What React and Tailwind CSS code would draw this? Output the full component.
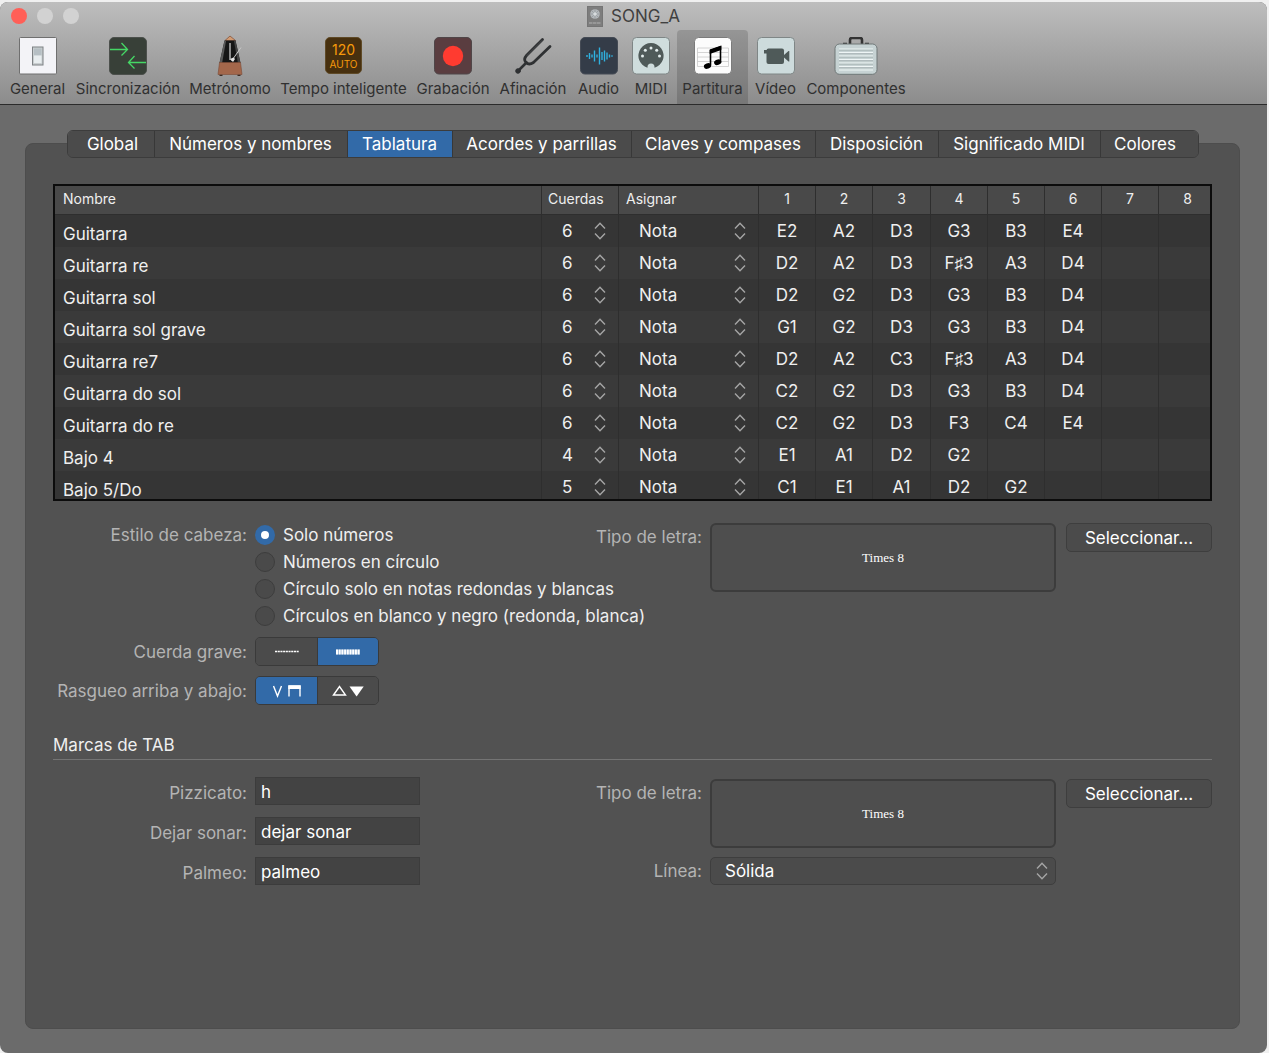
import { useState } from 'react';
import clsx from 'clsx';

const TABS = [
  { label: 'Global', width: 'w-[86px] pl-1' },
  { label: 'Números y nombres', width: 'w-[193px]' },
  { label: 'Tablatura', width: 'w-[105px]' },
  { label: 'Acordes y parrillas', width: 'w-[179px]' },
  { label: 'Claves y compases', width: 'w-[184px]' },
  { label: 'Disposición', width: 'w-[123px]' },
  { label: 'Significado MIDI', width: 'w-[162px]' },
  { label: 'Colores', width: 'w-[98px] pr-2' },
];

const TUNINGS = [
  { name: 'Guitarra', strings: 6, notes: ['E2', 'A2', 'D3', 'G3', 'B3', 'E4'] },
  { name: 'Guitarra re', strings: 6, notes: ['D2', 'A2', 'D3', 'F♯3', 'A3', 'D4'] },
  { name: 'Guitarra sol', strings: 6, notes: ['D2', 'G2', 'D3', 'G3', 'B3', 'D4'] },
  { name: 'Guitarra sol grave', strings: 6, notes: ['G1', 'G2', 'D3', 'G3', 'B3', 'D4'] },
  { name: 'Guitarra re7', strings: 6, notes: ['D2', 'A2', 'C3', 'F♯3', 'A3', 'D4'] },
  { name: 'Guitarra do sol', strings: 6, notes: ['C2', 'G2', 'D3', 'G3', 'B3', 'D4'] },
  { name: 'Guitarra do re', strings: 6, notes: ['C2', 'G2', 'D3', 'F3', 'C4', 'E4'] },
  { name: 'Bajo 4', strings: 4, notes: ['E1', 'A1', 'D2', 'G2'] },
  { name: 'Bajo 5/Do', strings: 5, notes: ['C1', 'E1', 'A1', 'D2', 'G2'] },
];

const HEAD_STYLES = [
  'Solo números',
  'Números en círculo',
  'Círculo solo en notas redondas y blancas',
  'Círculos en blanco y negro (redonda, blanca)',
];

const STRING_NUMBERS = [1, 2, 3, 4, 5, 6, 7, 8];

function GeneralIcon() {
  return (
    <svg width="38" height="38" viewBox="0 0 38 38">
      <rect x="0.5" y="0.5" width="37" height="36.5" rx="1" fill="#f3f3f7" stroke="#6f6f6f" />
      <rect x="13.5" y="10" width="10.5" height="18" fill="#c9ced0" stroke="#7d8184" />
      <rect x="15" y="11.5" width="7.5" height="7" fill="#b6bfc4" />
      <rect x="15" y="18.5" width="7.5" height="7.5" fill="#e8edef" />
    </svg>
  );
}

function SyncIcon() {
  return (
    <svg width="38" height="38" viewBox="0 0 38 38">
      <rect x="0.5" y="0.5" width="37" height="37" rx="4.5" fill="#384038" stroke="#4c504c" />
      <g fill="none" stroke="#45d765" strokeWidth="1.3">
        <path d="M1 12.5H18.500M12.500 6l6 6.500-6 6" />
        <path d="M37 25.5H19.500M25.500 19l-6 6.500 6 6" />
      </g>
    </svg>
  );
}

function MetronomeIcon() {
  return (
    <svg width="26" height="42" viewBox="0 0 26 42">
      <path d="M8 5.500L13 1l5.500 4.500z" fill="#d09a72" stroke="#86543c" strokeWidth="0.800" />
      <path d="M7.500 5.500h11L23.500 28h-21z" fill="#161616" />
      <path d="M7.500 5.500L2.500 28h2.600L9 6z" fill="#5a5a5a" />
      <path d="M18.500 5.500L23.500 28h-2.600L17 6z" fill="#454545" />
      <path d="M13 8v17" stroke="#9a9a9a" strokeWidth="1.800" />
      <path d="M14.500 26L24 12.500" stroke="#c8c8c8" strokeWidth="1" />
      <path d="M13 24l3.500-1.500 1.500 1.500-2 3z" fill="#e4e4e4" />
      <path d="M2.500 27.500h21L25 39.500H1z" fill="#a3674b" stroke="#7c4a35" strokeWidth="0.600" />
      <path d="M2.500 39.800h3v1.200h-3zM20.500 39.800h3v1.200h-3z" fill="#3c2a22" />
    </svg>
  );
}

function TempoIcon() {
  return (
    <span className="flex h-[37px] w-[37px] flex-col items-center justify-center rounded-[5px] border border-[#5f4a27] bg-[#47300f] text-[#f79a0b]">
      <span className="text-[14px] leading-4">120</span>
      <span className="text-[10px] leading-3">AUTO</span>
    </span>
  );
}

function RecordIcon() {
  return (
    <svg width="38" height="38" viewBox="0 0 38 38">
      <rect x="0.500" y="0.500" width="37" height="36.500" rx="4.500" fill="#5a3d40" stroke="#4f4648" />
      <circle cx="19" cy="19" r="10.200" fill="#ff3b30" />
    </svg>
  );
}

function TuningForkIcon() {
  return (
    <svg width="38" height="38" viewBox="0 0 38 38" fill="none" stroke="#2f3133" strokeLinecap="round">
      <path d="M28.500 2.500L12.500 18.500q-3.500 4 -.5 7t7.500 0L36 9.500" strokeWidth="2.800" />
      <path d="M12.500 25.500L4 34" strokeWidth="2.600" />
      <circle cx="4" cy="34" r="2.300" fill="#2f3133" strokeWidth="1" />
      <path d="M28 3.500L13 18.500" stroke="#5c5f61" strokeWidth="0.600" />
    </svg>
  );
}

function AudioIcon() {
  return (
    <svg width="38" height="38" viewBox="0 0 38 38">
      <rect x="0.500" y="0.500" width="37" height="36.500" rx="4.500" fill="#343c48" stroke="#444a54" />
      <path
        d="M7 18v2M9.500 16v6M12 17.500v3M14.500 13.500v11M17 17.500v3M19.500 10.500v17M22 15v8M24.500 13.500v11M27 15.500v7M29.500 17.500v3M32 18.200v1.600"
        stroke="#2fb1e0"
        strokeWidth="1.400"
      />
    </svg>
  );
}

function MidiIcon() {
  return (
    <svg width="38" height="38" viewBox="0 0 38 38">
      <rect x="0.500" y="0.500" width="37" height="36.500" rx="4" fill="#cfdddd" stroke="#7f8686" />
      <path d="M15.500 30.800A12.600 12.600 0 1 1 22.500 30.800V30a3.500 3.500 0 0 0-7 0z" fill="#4f5a59" />
      <g fill="#e3eded">
        <circle cx="10.500" cy="19" r="1.500" />
        <circle cx="13.300" cy="13.300" r="1.500" />
        <circle cx="19" cy="11" r="1.500" />
        <circle cx="24.700" cy="13.300" r="1.500" />
        <circle cx="27.500" cy="19" r="1.500" />
      </g>
    </svg>
  );
}

function ScoreIcon() {
  return (
    <svg width="38" height="38" viewBox="0 0 38 38">
      <rect x="0.500" y="0.500" width="37" height="36.500" rx="4" fill="#fcfcfc" stroke="#7b7b7b" />
      <path d="M3.500 11h31v18.500h-31zM3.500 15.500h31M3.500 20h31M3.500 24.500h31" fill="none" stroke="#c9c9c9" strokeWidth="0.800" />
      <path d="M16.500 28.500V13.500L26.500 10v15.500" fill="none" stroke="#000" strokeWidth="1.600" />
      <path d="M15.700 12.500L27.300 8.500v4.500L15.700 17z" />
      <ellipse cx="13.500" cy="29" rx="3.700" ry="2.700" transform="rotate(-20 13.500 29)" />
      <ellipse cx="23.700" cy="25.200" rx="3.700" ry="2.700" transform="rotate(-20 23.700 25.200)" />
    </svg>
  );
}

function VideoIcon() {
  return (
    <svg width="38" height="38" viewBox="0 0 38 38">
      <rect x="0.500" y="0.500" width="37" height="36.500" rx="4" fill="#cddbdc" stroke="#7f8686" />
      <rect x="9.500" y="11.500" width="17.500" height="15.500" rx="2" fill="#4f5a59" />
      <path d="M7 13h3v3.500H7zM27 18l4.500-4h.8v10.500h-.8L27 20.500z" fill="#4f5a59" />
    </svg>
  );
}

function ComponentsIcon() {
  return (
    <svg width="44" height="38" viewBox="0 0 44 38">
      <path d="M16 7V3q0-2 2-2h8q2 0 2 2v4" fill="none" stroke="#333" strokeWidth="2.600" />
      <path d="M9 6.500h4M31 6.500h4" stroke="#333" strokeWidth="1.500" />
      <rect x="1" y="7" width="42" height="30.300" rx="4.500" fill="#c6d2d3" stroke="#6f7777" />
      <path d="M5 12h34M5 15.500h34M5 19h34M5 22.500h34M5 26h34M5 29.500h34M5 33h34" stroke="#eef5f5" strokeWidth="1.200" />
      <path d="M5 13.200h34M5 16.700h34M5 20.200h34M5 23.700h34M5 27.200h34M5 30.700h34" stroke="#9fabac" strokeWidth="0.700" />
    </svg>
  );
}

const TOOLBAR = [
  { label: 'General', Icon: GeneralIcon, width: 'w-[67px]' },
  { label: 'Sincronización', Icon: SyncIcon, width: 'w-[114px]' },
  { label: 'Metrónomo', Icon: MetronomeIcon, width: 'w-[90px]' },
  { label: 'Tempo inteligente', Icon: TempoIcon, width: 'w-[137px]' },
  { label: 'Grabación', Icon: RecordIcon, width: 'w-[82px]' },
  { label: 'Afinación', Icon: TuningForkIcon, width: 'w-[78px]' },
  { label: 'Audio', Icon: AudioIcon, width: 'w-[53px]' },
  { label: 'MIDI', Icon: MidiIcon, width: 'w-[52px]' },
  { label: 'Partitura', Icon: ScoreIcon, width: 'w-[71px]' },
  { label: 'Vídeo', Icon: VideoIcon, width: 'w-[55px]' },
  { label: 'Componentes', Icon: ComponentsIcon, width: 'w-[106px]' },
];

function DocumentIcon() {
  return (
    <svg width="16" height="21" viewBox="0 0 16 21">
      <rect x="0.500" y="0.500" width="15" height="20" fill="#7d7d7d" stroke="#757575" />
      <circle cx="8" cy="8" r="4.800" fill="#b4b8bc" />
      <path d="M8 3.500v9M3.500 8h9M4.800 4.800l6.400 6.400M11.200 4.800l-6.400 6.400" stroke="#8e9498" strokeWidth="0.700" />
      <circle cx="8" cy="8" r="1.800" fill="#d8dcdf" />
      <path d="M2 17h12" stroke="#b4b4b4" strokeWidth="1.200" strokeDasharray="3 0.500 4 0.500" />
    </svg>
  );
}

function Chevrons() {
  return (
    <svg width="12" height="18" viewBox="0 0 12 18" fill="none" stroke="#a5a5a5" strokeWidth="1.400">
      <path d="M1 6.500L6 1.200l5 5.300M1 11.500l5 5.300 5-5.300" />
    </svg>
  );
}

function CellSelect({ label, options, initial }) {
  const [value, setValue] = useState(initial);
  return (
    <div className="relative">
      <select
        aria-label={label}
        value={value}
        onChange={(e) => setValue(e.target.value)}
        className="block h-8 w-full appearance-none bg-transparent pl-5 outline-none"
      >
        {options.map((o) => (
          <option key={o} value={o}>{o}</option>
        ))}
      </select>
      <span className="pointer-events-none absolute inset-y-0 right-3 flex items-center">
        <Chevrons />
      </span>
    </div>
  );
}

function TuningTable() {
  const headCell = 'h-[29px] border-b border-[#2e2e2e] p-0 pb-[2px] font-normal';
  const divider = 'border-l border-[#2e2e2e]';

  return (
    <div className="h-[317px] overflow-hidden border-2 border-[#0c0c0c] bg-[#353535]">
      <table className="w-full table-fixed border-separate border-spacing-0 text-[#efefef]">
        <colgroup>
          <col />
          <col className="w-[77px]" />
          <col className="w-[140px]" />
          <col className="w-[57px]" />
          <col className="w-[57px]" />
          <col className="w-[58px]" />
          <col className="w-[57px]" />
          <col className="w-[57px]" />
          <col className="w-[57px]" />
          <col className="w-[57px]" />
          <col className="w-[52px]" />
        </colgroup>
        <thead className="bg-[#494949] text-[14px]">
          <tr>
            <th className={clsx(headCell, 'pl-2 text-left')}>Nombre</th>
            <th className={clsx(headCell, divider, 'pl-[6px] text-left')}>Cuerdas</th>
            <th className={clsx(headCell, divider, 'pl-[7px] text-left')}>Asignar</th>
            {STRING_NUMBERS.map((n) => (
              <th key={n} className={clsx(headCell, divider, 'text-center last:pl-[6px]')}>{n}</th>
            ))}
          </tr>
        </thead>
        <tbody>
          {TUNINGS.map((t) => (
            <tr key={t.name} className="h-8 even:bg-[#3a3a3a]">
              <td className="p-0 pl-2 pt-[5px]">{t.name}</td>
              <td className={clsx(divider, 'p-0')}>
                <CellSelect label={`Cuerdas, ${t.name}`} options={[3, 4, 5, 6, 7, 8]} initial={t.strings} />
              </td>
              <td className={clsx(divider, 'p-0')}>
                <CellSelect label={`Asignar, ${t.name}`} options={['Nota', 'Canal']} initial="Nota" />
              </td>
              {STRING_NUMBERS.map((n) => (
                <td key={n} className={clsx(divider, 'p-0 text-center')}>{t.notes[n - 1]}</td>
              ))}
            </tr>
          ))}
        </tbody>
      </table>
    </div>
  );
}

function Segmented({ labelId, items }) {
  const [active, setActive] = useState(items.findIndex((i) => i.on));
  return (
    <div role="group" aria-labelledby={labelId} className="flex overflow-hidden rounded-[5px] border border-[#3a3a3a]">
      {items.map((item, i) => (
        <button
          key={item.name}
          type="button"
          aria-label={item.name}
          aria-pressed={i === active}
          onClick={() => setActive(i)}
          className={clsx(
            'flex h-[27px] w-[61px] items-center justify-center border-l border-[#3a3a3a] first:border-l-0',
            i === active ? 'bg-[#326aa8]' : 'bg-[#4b4b4b]'
          )}
        >
          {item.icon}
        </button>
      ))}
    </div>
  );
}

const LOW_STRING = [
  {
    name: 'Fina',
    icon: (
      <svg width="24" height="6" viewBox="0 0 24 6">
        <path d="M0 2.500h24" stroke="#fff" strokeWidth="1.300" strokeDasharray="2.100 0.600" />
      </svg>
    ),
  },
  {
    name: 'Gruesa',
    on: true,
    icon: (
      <svg width="24" height="6" viewBox="0 0 24 6">
        <path d="M0 3h24" stroke="#fff" strokeWidth="5" strokeDasharray="2 0.700" />
        <path d="M0 3h24" stroke="#fff" strokeOpacity="0.400" strokeWidth="5" />
      </svg>
    ),
  },
];

const STRUM = [
  {
    name: 'Arco',
    on: true,
    icon: (
      <svg width="30" height="14" viewBox="0 0 30 14" fill="none" stroke="#fff">
        <path d="M1.500 2L5.500 12l4-10" strokeWidth="1.400" />
        <path d="M17 12.500V2h11v10.500" strokeWidth="1.400" />
        <path d="M16.300 3.300h12.400" strokeWidth="3.500" />
      </svg>
    ),
  },
  {
    name: 'Flechas',
    icon: (
      <svg width="32" height="12" viewBox="0 0 32 12">
        <path d="M1.500 10L7.500 1.500l6 8.500z" fill="none" stroke="#fff" strokeWidth="1.400" />
        <path d="M17.500 1.500h14.200L24.600 11.500z" fill="#fff" />
      </svg>
    ),
  },
];

function FontPicker() {
  return (
    <div className="flex items-start">
      <span className="mr-2 leading-7 text-[#b4b4b4]">Tipo de letra:</span>
      <div className="mr-[10px] flex h-[69px] w-[346px] items-center justify-center rounded-md border-2 border-[#3c3c3c] bg-[#4e4e4e] font-['Liberation_Serif',serif] text-[13px] text-white">
        Times 8
      </div>
      <button type="button" className="h-[29px] w-[146px] rounded-[5px] border border-[#3e3e3e] bg-[#4b4b4b] text-white">
        Seleccionar...
      </button>
    </div>
  );
}

function TextRow({ id, label, initial }) {
  const [value, setValue] = useState(initial);
  return (
    <div className="flex items-end">
      <label htmlFor={id} className="mr-2 w-[194px] text-right text-[#b4b4b4]">{label}</label>
      <input
        id={id}
        type="text"
        value={value}
        onChange={(e) => setValue(e.target.value)}
        className="h-7 w-[165px] border border-[#3c3c3c] bg-[#434343] px-[5px] pt-[2px] text-white outline-none"
      />
    </div>
  );
}

export default function App() {
  const [section, setSection] = useState('Partitura');
  const [tab, setTab] = useState('Tablatura');
  const [headStyle, setHeadStyle] = useState(HEAD_STYLES[0]);

  return (
    <div className="flex min-h-screen flex-col bg-[#f0f0f0] pr-[2px] pt-[2px] font-[Inter,sans-serif] text-[17px] leading-6">
      <div className="flex flex-1 flex-col overflow-hidden rounded-lg bg-[#6b6b6b]">
        <header className="border-b border-[#2b2b2b] bg-gradient-to-b from-[#bebebe] to-[#8c8c8c]">
          <div className="relative flex h-7 items-center justify-center">
            <div className="absolute left-[11px] flex gap-[10px]">
              <button type="button" aria-label="Cerrar" className="h-4 w-4 rounded-full bg-[#ff5f57]" />
              <button type="button" aria-label="Minimizar" className="h-4 w-4 rounded-full bg-[#d2d2d2]" />
              <button type="button" aria-label="Zoom" className="h-4 w-4 rounded-full bg-[#d2d2d2]" />
            </div>
            <h1 className="flex items-center gap-2 text-[#404040]">
              <DocumentIcon />
              SONG_A
            </h1>
          </div>
          <nav className="flex pl-1">
            {TOOLBAR.map(({ label, Icon, width }) => (
              <button
                key={label}
                type="button"
                onClick={() => setSection(label)}
                className={clsx(
                  'flex h-[74px] shrink-0 flex-col items-center whitespace-nowrap rounded-t text-[15px] text-[#303030]',
                  width,
                  section === label && 'bg-black/15'
                )}
              >
                <span className="flex h-[51px] items-center justify-center">
                  <Icon />
                </span>
                <span className="leading-4">{label}</span>
              </button>
            ))}
          </nav>
        </header>

        <main className="flex flex-1 flex-col pb-6 pl-[25px] pr-[27px] pt-[25px]">
          <div className="relative z-10 -mb-[15px] flex self-center overflow-hidden rounded-md border border-[#3c3c3c]">
            {TABS.map(({ label, width }) => (
              <button
                key={label}
                type="button"
                onClick={() => setTab(label)}
                className={clsx(
                  'h-[26px] whitespace-nowrap border-l border-[#383838] text-white first:border-l-0',
                  width,
                  tab === label ? 'bg-[#326aa8]' : 'bg-[#4b4b4b]'
                )}
              >
                {label}
              </button>
            ))}
          </div>

          <section className="flex flex-1 flex-col rounded-lg border border-[#4d4d4d] bg-[#525252] px-[27px] pt-10">
            <TuningTable />

            <div className="mt-[22px] flex justify-between">
              <div className="min-w-0 flex-1 whitespace-nowrap">
                <div role="radiogroup" aria-labelledby="head-style" className="flex">
                  <span id="head-style" className="mr-2 w-[194px] shrink-0 text-right text-[#b4b4b4]">Estilo de cabeza:</span>
                  <div className="flex flex-col gap-[3px]">
                    {HEAD_STYLES.map((s) => (
                      <label key={s} className="flex h-6 items-center gap-2 text-[#efefef]">
                        <input
                          type="radio"
                          name="head-style"
                          checked={headStyle === s}
                          onChange={() => setHeadStyle(s)}
                          className="h-5 w-5 shrink-0 appearance-none rounded-full border border-[#3d3d3d] bg-[#4a4a4a] checked:border-[6px] checked:border-[#326aa8] checked:bg-white"
                        />
                        {s}
                      </label>
                    ))}
                  </div>
                </div>
                <div className="mt-[9px] flex items-center">
                  <span id="low-string" className="mr-2 w-[194px] text-right text-[#b4b4b4]">Cuerda grave:</span>
                  <Segmented labelId="low-string" items={LOW_STRING} />
                </div>
                <div className="mt-[10px] flex items-center">
                  <span id="strum" className="mr-2 w-[194px] text-right text-[#b4b4b4]">Rasgueo arriba y abajo:</span>
                  <Segmented labelId="strum" items={STRUM} />
                </div>
              </div>
              <FontPicker />
            </div>

            <h2 className="mt-7 border-b border-[#747474] pb-[2px] text-[#efefef]">Marcas de TAB</h2>

            <div className="mt-[17px] flex justify-between">
              <div className="flex flex-col gap-3">
                <TextRow id="pizzicato" label="Pizzicato:" initial="h" />
                <TextRow id="let-ring" label="Dejar sonar:" initial="dejar sonar" />
                <TextRow id="palm" label="Palmeo:" initial="palmeo" />
              </div>
              <div className="flex flex-col gap-[9px] pt-[2px]">
                <FontPicker />
                <div className="flex items-center justify-end pr-[156px]">
                  <label htmlFor="line" className="mr-2 text-[#b4b4b4]">Línea:</label>
                  <div className="relative w-[346px]">
                    <select
                      id="line"
                      defaultValue="Sólida"
                      className="block h-7 w-full appearance-none rounded-[5px] border border-[#3e3e3e] bg-[#4b4b4b] pl-[14px] text-white outline-none"
                    >
                      <option>Sólida</option>
                      <option>Discontinua</option>
                    </select>
                    <span className="pointer-events-none absolute inset-y-0 right-2 flex items-center">
                      <Chevrons />
                    </span>
                  </div>
                </div>
              </div>
            </div>
          </section>
        </main>
      </div>
    </div>
  );
}
